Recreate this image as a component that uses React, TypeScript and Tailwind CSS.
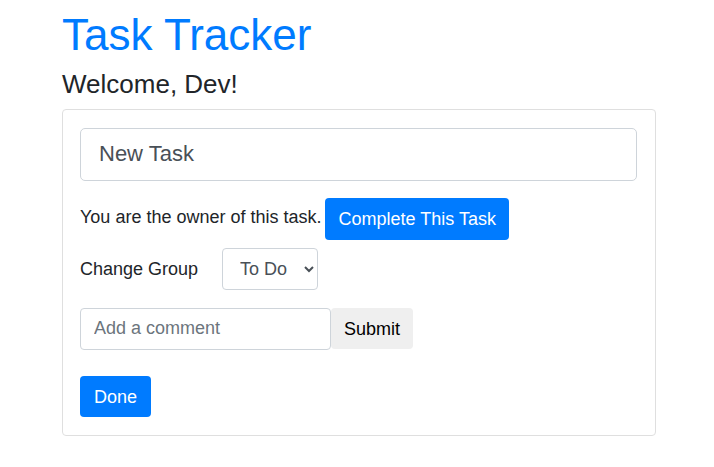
import { useState } from "react";

export default function App() {
  const [title, setTitle] = useState("New Task");
  const [group, setGroup] = useState("To Do");
  const [comment, setComment] = useState("");

  return (
    <main className="pt-2 pr-[58px] pl-[62px] font-['Liberation_Sans',Arial,sans-serif] text-lg leading-[27px] text-[#212529]">
      <h1 className="mb-2 text-[44px] leading-[53px] text-[#007bff]">Task Tracker</h1>
      <h2 className="mb-2.5 text-[26px] leading-[30px]">Welcome, Dev!</h2>
      <section className="rounded border border-[#dfdfdf] py-[18px] pr-[18px] pl-[17px]">
        <input
          aria-label="Task name"
          className="block h-[53px] w-full rounded-[5px] border border-[#ced4da] px-[18px] pb-0.5 text-[22px] text-[#495057]"
          value={title}
          onChange={(e) => setTitle(e.target.value)}
        />
        <div className="mt-[17px] flex items-center gap-1">
          <p className="pb-1">You are the owner of this task.</p>
          <button type="button" className="h-[42px] rounded bg-[#007bff] px-[13px] text-white">Complete This Task</button>
        </div>
        <div className="mt-2 flex items-center">
          <label htmlFor="group" className="w-[142px]">Change Group</label>
          <select
            id="group"
            className="h-[42px] w-24 rounded border border-[#ced4da] bg-white px-[13px] text-[#495057]"
            value={group}
            onChange={(e) => setGroup(e.target.value)}
          >
            <option>To Do</option>
            <option>Doing</option>
            <option>Done</option>
          </select>
        </div>
        <form className="mt-[18px] flex items-start" onSubmit={(e) => e.preventDefault()}>
          <input
            aria-label="Comment"
            placeholder="Add a comment"
            className="h-[42px] w-[251px] rounded border border-[#ced4da] px-[13px] pb-0.5 placeholder:text-[#6c757d]"
            value={comment}
            onChange={(e) => setComment(e.target.value)}
          />
          <button type="submit" className="h-[41px] rounded bg-[#efefef] px-[13px] pt-0.5 text-black">Submit</button>
        </form>
        <button type="button" className="mt-[26px] block h-[41px] rounded bg-[#007bff] px-3.5 pt-0.5 text-white">Done</button>
      </section>
    </main>
  );
}
